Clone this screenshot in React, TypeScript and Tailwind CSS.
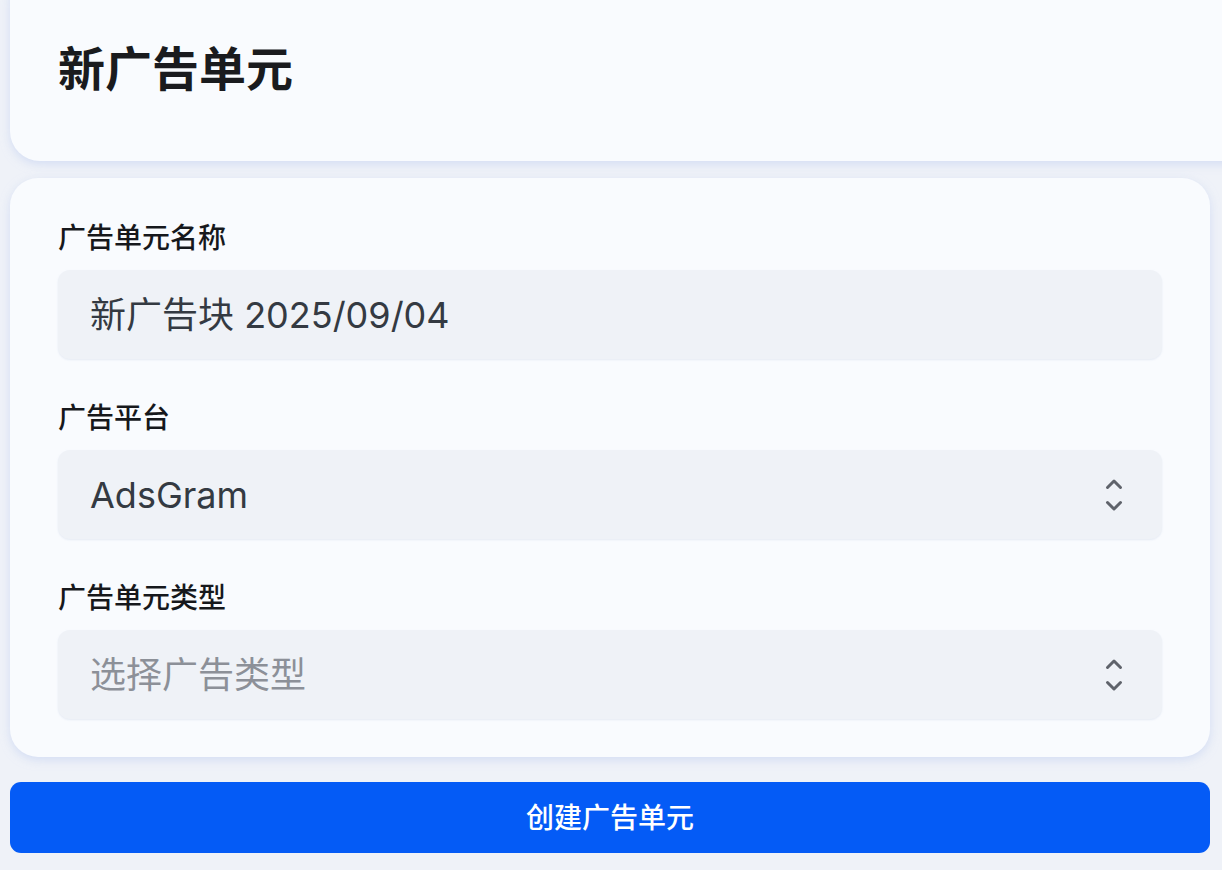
import React from "react";

const Chevrons = () => (
  <svg width="18" height="34" viewBox="0 0 18 34" fill="none" stroke="#5f636b" strokeWidth="3" strokeLinecap="round" strokeLinejoin="round">
    <path d="M2.5 9.5 9 3l6.5 6.5" />
    <path d="M2.5 24.5 9 31l6.5-6.5" />
  </svg>
);

const Field = ({ label, children }: { label: string; children: React.ReactNode }) => (
  <div className="flex flex-col">
    <label className="text-[28px] leading-[40px] font-medium text-[#16181c] mb-[12px]">{label}</label>
    {children}
  </div>
);

export default function App() {
  return (
    <div
      className="min-h-[870px] bg-[#eff2f8] overflow-hidden flex flex-col pl-[10px] pr-[12px] pb-[17px]"
      style={{ fontFamily: 'Inter, "Noto Sans CJK SC", sans-serif' }}
    >
      {/* header card, scrolled partly out of view */}
      <div className="-mt-[30px] -mr-[60px] h-[191px] bg-[#f9fbfe] rounded-[30px] shadow-[0_3px_10px_rgba(190,204,240,0.55)] pl-[48px] pt-[71px]">
        <h1 className="text-[47px] leading-[56px] font-bold text-[#1a1b1e]">新广告单元</h1>
      </div>

      {/* form card */}
      <div className="mt-[17px] bg-[#f9fbfe] rounded-[28px] shadow-[0_3px_10px_rgba(190,204,240,0.55)] px-[48px] pt-[40px] pb-[38px] flex flex-col gap-[39px]">
        <Field label="广告单元名称">
          <div className="h-[89px] rounded-[12px] bg-[#eff2f7] flex items-center px-[32px] shadow-[0_1px_2px_rgba(200,210,230,0.4)]">
            <span className="text-[36px] text-[#343a42]">新广告块 2025/09/04</span>
          </div>
        </Field>
        <Field label="广告平台">
          <div className="h-[89px] rounded-[12px] bg-[#eff2f7] flex items-center justify-between pl-[32px] pr-[39px] shadow-[0_1px_2px_rgba(200,210,230,0.4)]">
            <span className="text-[36px] text-[#343a42]">AdsGram</span>
            <Chevrons />
          </div>
        </Field>
        <Field label="广告单元类型">
          <div className="h-[89px] rounded-[12px] bg-[#eff2f7] flex items-center justify-between pl-[32px] pr-[39px] shadow-[0_1px_2px_rgba(200,210,230,0.4)]">
            <span className="text-[36px] text-[#8c9098]">选择广告类型</span>
            <Chevrons />
          </div>
        </Field>
      </div>

      <button className="mt-[25px] h-[71px] rounded-[11px] bg-[#045bf6] text-white text-[28px] font-medium flex items-center justify-center">
        创建广告单元
      </button>
    </div>
  );
}
